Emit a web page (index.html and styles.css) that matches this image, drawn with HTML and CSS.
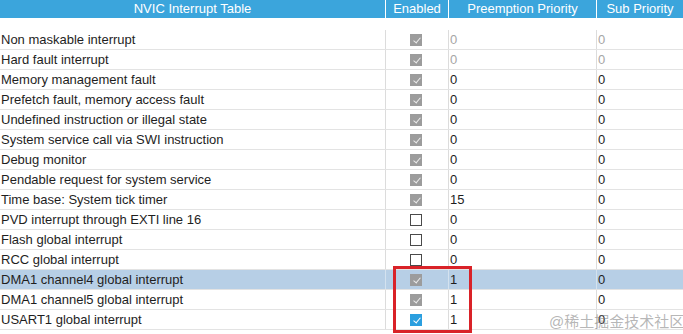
FILE: index.html
```html
<!DOCTYPE html>
<html>
<head>
<meta charset="utf-8">
<link rel="stylesheet" href="styles.css">
</head>
<body>
<div class="table">
  <div class="row head">
    <div class="cell">NVIC Interrupt Table</div>
    <div class="cell">Enabled</div>
    <div class="cell">Preemption Priority</div>
    <div class="cell">Sub Priority</div>
  </div>
  <div class="body">
    <div class="row"><div class="cell">Non maskable interrupt</div><div class="cell c"><span class="cb on dis"></span></div><div class="cell muted">0</div><div class="cell muted">0</div></div>
    <div class="row"><div class="cell">Hard fault interrupt</div><div class="cell c"><span class="cb on dis"></span></div><div class="cell muted">0</div><div class="cell muted">0</div></div>
    <div class="row"><div class="cell">Memory management fault</div><div class="cell c"><span class="cb on dis"></span></div><div class="cell">0</div><div class="cell">0</div></div>
    <div class="row"><div class="cell">Prefetch fault, memory access fault</div><div class="cell c"><span class="cb on dis"></span></div><div class="cell">0</div><div class="cell">0</div></div>
    <div class="row"><div class="cell">Undefined instruction or illegal state</div><div class="cell c"><span class="cb on dis"></span></div><div class="cell">0</div><div class="cell">0</div></div>
    <div class="row"><div class="cell">System service call via SWI instruction</div><div class="cell c"><span class="cb on dis"></span></div><div class="cell">0</div><div class="cell">0</div></div>
    <div class="row"><div class="cell">Debug monitor</div><div class="cell c"><span class="cb on dis"></span></div><div class="cell">0</div><div class="cell">0</div></div>
    <div class="row"><div class="cell">Pendable request for system service</div><div class="cell c"><span class="cb on dis"></span></div><div class="cell">0</div><div class="cell">0</div></div>
    <div class="row"><div class="cell">Time base: System tick timer</div><div class="cell c"><span class="cb on dis"></span></div><div class="cell">15</div><div class="cell">0</div></div>
    <div class="row"><div class="cell">PVD interrupt through EXTI line 16</div><div class="cell c"><span class="cb"></span></div><div class="cell">0</div><div class="cell">0</div></div>
    <div class="row"><div class="cell">Flash global interrupt</div><div class="cell c"><span class="cb"></span></div><div class="cell">0</div><div class="cell">0</div></div>
    <div class="row"><div class="cell">RCC global interrupt</div><div class="cell c"><span class="cb"></span></div><div class="cell">0</div><div class="cell">0</div></div>
    <div class="row sel"><div class="cell">DMA1 channel4 global interrupt</div><div class="cell c"><span class="cb on dis"></span></div><div class="cell">1</div><div class="cell">0</div></div>
    <div class="row"><div class="cell">DMA1 channel5 global interrupt</div><div class="cell c"><span class="cb on dis"></span></div><div class="cell">1</div><div class="cell">0</div></div>
    <div class="row"><div class="cell">USART1 global interrupt</div><div class="cell c"><span class="cb on act"></span></div><div class="cell">1</div><div class="cell">0</div></div>
  </div>
</div>
<div class="redbox"></div>
<div class="watermark">@稀土掘金技术社区</div>
</body>
</html>
```
FILE: styles.css
```css
html, body {
  margin: 0;
  padding: 0;
  background: #ffffff;
}
body {
  width: 683px;
  height: 334px;
  overflow: hidden;
  position: relative;
  font-family: "Liberation Sans", Arial, sans-serif;
  font-size: 13px;
  color: #1e1e1e;
}
.table {
  display: flex;
  flex-direction: column;
}
.row {
  display: grid;
  grid-template-columns: 386px 63px 148px 86px;
  height: 19px;
  border-bottom: 1px solid #e3e3e3;
}
.row .cell {
  border-right: 1px solid #dcdcdc;
  padding-left: 1px;
  line-height: 19px;
  white-space: nowrap;
  overflow: hidden;
}
.row .cell:last-child {
  border-right: none;
}
.head {
  height: 18px;
  border-bottom: none;
  background: #3ba5dc;
  color: #ffffff;
  font-size: 13px;
}
.head .cell {
  border-right: 1px solid #ffffff;
  text-align: center;
  line-height: 18px;
  padding-left: 0;
}
.body {
  padding-top: 12px;
}
.cell.c {
  display: flex;
  align-items: center;
  justify-content: center;
  padding-left: 0;
  padding-right: 0;
}
.muted {
  color: #a6a6a6;
}
.sel {
  background: #b7cfe6;
}
.sel .cell {
  border-right-color: #d4e2ef;
}
.cb {
  display: inline-block;
  width: 10px;
  height: 10px;
  border: 1.5px solid #4a4a4a;
  background: #ffffff;
  position: relative;
  left: -1px;
}
.cb.on {
  border-color: transparent;
}
.cb.dis {
  background: #9c9c9c;
}
.cb.act {
  background: #2b9fdf;
}
.cb.on::after {
  content: "";
  position: absolute;
  top: 1px;
  left: 3.5px;
  width: 3px;
  height: 6px;
  border-right: 1.5px solid #ececec;
  border-bottom: 1.5px solid #ececec;
  transform: rotate(40deg);
  transform-origin: center;
}
.cb.act::after {
  border-color: #ffffff;
}
.redbox {
  position: absolute;
  left: 393px;
  top: 266px;
  width: 73px;
  height: 61px;
  border: 3px solid #d92228;
}
.watermark {
  position: absolute;
  left: 549px;
  top: 313px;
  font-family: "Liberation Sans", "Noto Sans CJK SC", sans-serif;
  font-size: 15px;
  line-height: 18px;
  color: rgba(120, 120, 120, 0.55);
  white-space: nowrap;
}
```
